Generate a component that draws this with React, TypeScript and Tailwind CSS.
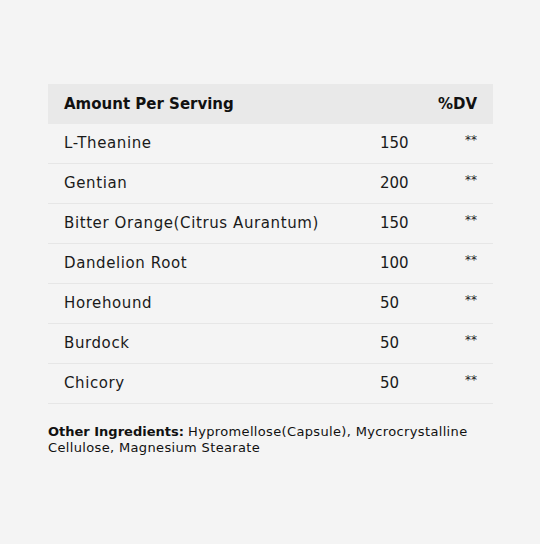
const rows = [
  { name: "L-Theanine", amount: "150" },
  { name: "Gentian", amount: "200" },
  { name: "Bitter Orange(Citrus Aurantum)", amount: "150" },
  { name: "Dandelion Root", amount: "100" },
  { name: "Horehound", amount: "50" },
  { name: "Burdock", amount: "50" },
  { name: "Chicory", amount: "50" },
]

export default function App() {
  return (
    <div
      className="min-h-[544px] w-[540px] bg-[#f4f4f4] px-12 pt-[84px] text-[#111111]"
      style={{ fontFamily: '"DejaVu Sans", sans-serif' }}
    >
      <div className="w-[445px]">
        {/* Header */}
        <div className="grid h-10 grid-cols-[316px_1fr_auto] items-center bg-[#e9e9e9] px-4 text-[15px] font-bold">
          <span className="col-span-2">Amount Per Serving</span>
          <span>%DV</span>
        </div>

        {rows.map((row) => (
          <div
            key={row.name}
            className="grid h-10 grid-cols-[316px_1fr_auto] items-center border-b border-[#e6e6e6] px-4 text-[15px] text-[#1a1a1a]"
          >
            <span className="tracking-[0.6px]">{row.name}</span>
            <span>{row.amount}</span>
            <span className="-mt-2 text-[12px]">**</span>
          </div>
        ))}
      </div>

      {/* Other ingredients */}
      <p className="mt-5 w-[440px] text-[13px] leading-4">
        <span className="font-bold">Other Ingredients:</span>{" "}
        <span className="tracking-[0.35px]">
          Hypromellose(Capsule), Mycrocrystalline Cellulose, Magnesium Stearate
        </span>
      </p>
    </div>
  )
}
